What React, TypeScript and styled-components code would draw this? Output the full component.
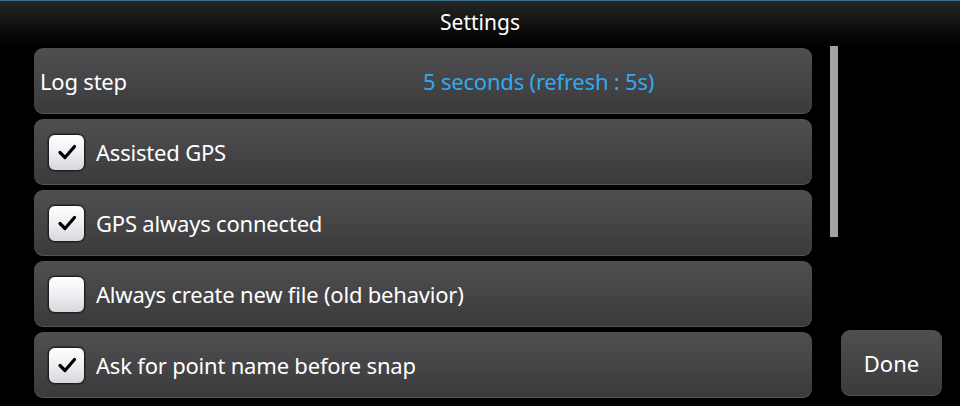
import styled, { createGlobalStyle } from "styled-components";

const GlobalStyle = createGlobalStyle`
  html, body {
    margin: 0;
    padding: 0;
    background: #000;
  }
  body {
    font-family: "Noto Sans", "Open Sans", sans-serif;
    color: #fff;
  }
`;

const Screen = styled.div`
  width: 960px;
  height: 406px;
  background: #000;
  overflow: hidden;
  display: flex;
  flex-direction: column;
`;

const TitleBar = styled.header`
  height: 46px;
  flex-shrink: 0;
  border-top: 1px solid #3d6f8e;
  background: linear-gradient(to bottom, #262626 0%, #0a0a0a 70%, #000 100%);
  display: flex;
  justify-content: center;
  align-items: center;
  padding-bottom: 4px;
  box-sizing: border-box;
`;

const Title = styled.h1`
  margin: 0;
  font-size: 21px;
  font-weight: normal;
  color: #fff;
`;

const Main = styled.div`
  flex: 1;
  display: flex;
  padding-left: 34px;
`;

const List = styled.div`
  width: 778px;
  padding-top: 2px;
  display: flex;
  flex-direction: column;
  gap: 5px;
`;

const Row = styled.div<{ $pad: number }>`
  height: 66px;
  flex-shrink: 0;
  box-sizing: border-box;
  border-radius: 9px;
  background: linear-gradient(to bottom, #4f4e50 0%, #444345 55%, #3b3a3b 100%);
  box-shadow: inset 0 -1px 0 rgba(255, 255, 255, 0.14);
  display: flex;
  align-items: center;
  padding-left: ${(p) => p.$pad}px;
`;

const Label = styled.span`
  font-size: 22px;
  letter-spacing: -0.2px;
  color: #fff;
`;

const StepLabel = styled(Label)`
  width: 383px;
`;

const Value = styled.span`
  font-size: 22px;
  letter-spacing: -0.2px;
  color: #33a9ef;
`;

const Box = styled.div`
  width: 37px;
  height: 37px;
  box-sizing: border-box;
  border-radius: 7px;
  border: 1px solid #1e1e1e;
  background: linear-gradient(to bottom, #ffffff 0%, #f0eef2 50%, #d9d7db 100%);
  box-shadow: 0 0 0 1px rgba(0, 0, 0, 0.25);
  display: flex;
  align-items: center;
  justify-content: center;
  margin-right: 11px;
`;

const Scrollbar = styled.div`
  width: 8px;
  height: 191px;
  margin-left: 18px;
  background: #a3a3a3;
`;

const Side = styled.div`
  display: flex;
  flex-direction: column;
  justify-content: flex-end;
  padding-bottom: 10px;
  margin-left: 3px;
`;

const DoneButton = styled.button`
  width: 101px;
  height: 66px;
  border: none;
  border-radius: 9px;
  background: linear-gradient(to bottom, #4f4e50 0%, #444345 55%, #3b3a3b 100%);
  box-shadow: inset 0 -1px 0 rgba(255, 255, 255, 0.14);
  color: #fff;
  font-family: "Noto Sans", "Open Sans", sans-serif;
  font-size: 22px;
  padding: 0;
`;

function Check({ checked }: { checked: boolean }) {
  return (
    <Box>
      {checked && (
        <svg width="22" height="22" viewBox="0 0 22 22">
          <path d="M4 11.5 L9 16.5 L18.5 5.5" fill="none" stroke="#000" strokeWidth="3.2" strokeLinecap="round" strokeLinejoin="round" />
        </svg>
      )}
    </Box>
  );
}

const options = [
  { label: "Assisted GPS", checked: true },
  { label: "GPS always connected", checked: true },
  { label: "Always create new file (old behavior)", checked: false },
  { label: "Ask for point name before snap", checked: true },
];

export default function App() {
  return (
    <Screen>
      <GlobalStyle />
      <TitleBar>
        <Title>Settings</Title>
      </TitleBar>
      <Main>
        <List>
          <Row $pad={6}>
            <StepLabel>Log step</StepLabel>
            <Value>5 seconds (refresh : 5s)</Value>
          </Row>
          {options.map((o) => (
            <Row key={o.label} $pad={14}>
              <Check checked={o.checked} />
              <Label>{o.label}</Label>
            </Row>
          ))}
        </List>
        <Scrollbar />
        <Side>
          <DoneButton>Done</DoneButton>
        </Side>
      </Main>
    </Screen>
  );
}
